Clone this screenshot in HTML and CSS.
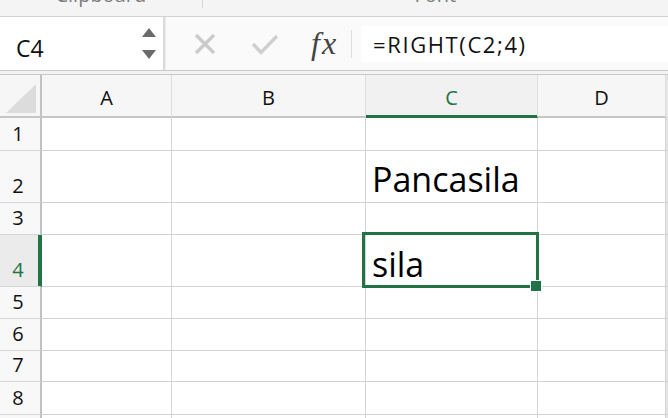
FILE: index.html
```html
<!DOCTYPE html>
<html>
<head>
<meta charset="utf-8">
<link rel="stylesheet" href="styles.css">
</head>
<body>
<div class="app">
  <div class="ribbon">
    <div class="rgroup clip"><span class="rlabel">Clipboard</span></div>
    <div class="rsep"></div>
    <div class="rgroup fontg"><span class="rlabel">Font</span></div>
  </div>
  <div class="fbar">
    <div class="namebox">
      <span class="ref">C4</span>
      <div class="spin">
        <svg width="14" height="9" viewBox="0 0 14 9"><polygon points="7,0 14,9 0,9" fill="#6b6b6b"/></svg>
        <svg width="14" height="9" viewBox="0 0 14 9"><polygon points="0,0 14,0 7,9" fill="#6b6b6b"/></svg>
      </div>
    </div>
    <div class="fcontrols">
      <svg class="ic-x" width="22" height="22" viewBox="0 0 22 22"><path d="M2 2 L20 20 M20 2 L2 20" stroke="#cbcbcb" stroke-width="3.4" fill="none"/></svg>
      <svg class="ic-check" width="28" height="21" viewBox="0 0 28 21"><polyline points="2,10 10,18.5 26,2" stroke="#cfcfcf" stroke-width="3.4" fill="none"/></svg>
      <span class="fx">fx</span>
      <span class="fsep"></span>
      <div class="finput">=RIGHT(C2;4)</div>
    </div>
  </div>
  <div class="strip"></div>
  <div class="sheet">
    <div class="corner"><svg width="30" height="29" viewBox="0 0 30 29"><polygon points="30,0 30,29 0,29" fill="#dcdcdc"/></svg></div>
    <div class="ch">A</div>
    <div class="ch">B</div>
    <div class="ch sel">C</div>
    <div class="ch">D</div>
    <div class="edge"></div>

    <div class="rh">1</div><div class="c"></div><div class="c"></div><div class="c"></div><div class="c"></div><div class="edge"></div>
    <div class="rh">2</div><div class="c"></div><div class="c"></div><div class="c"><span class="val">Pancasila</span></div><div class="c"></div><div class="edge"></div>
    <div class="rh">3</div><div class="c"></div><div class="c"></div><div class="c"></div><div class="c"></div><div class="edge"></div>
    <div class="rh sel">4</div><div class="c"></div><div class="c"></div><div class="c active"><span class="val">sila</span><span class="selbox"></span><span class="handle"></span></div><div class="c"></div><div class="edge"></div>
    <div class="rh">5</div><div class="c"></div><div class="c"></div><div class="c"></div><div class="c"></div><div class="edge"></div>
    <div class="rh">6</div><div class="c"></div><div class="c"></div><div class="c"></div><div class="c"></div><div class="edge"></div>
    <div class="rh">7</div><div class="c"></div><div class="c"></div><div class="c"></div><div class="c"></div><div class="edge"></div>
    <div class="rh">8</div><div class="c"></div><div class="c"></div><div class="c"></div><div class="c"></div><div class="edge"></div>
    <div class="rh"></div><div class="c"></div><div class="c"></div><div class="c"></div><div class="c"></div><div class="edge"></div>
  </div>
</div>
</body>
</html>
```
FILE: styles.css
```css
* { box-sizing: border-box; }
html, body { margin: 0; padding: 0; }
body {
  width: 668px;
  height: 418px;
  overflow: hidden;
  background: #ffffff;
  font-family: "Open Sans", "Liberation Sans", sans-serif;
  color: #111;
}
.app { width: 668px; height: 418px; overflow: hidden; }

/* ribbon */
.ribbon {
  height: 17px;
  display: flex;
  background: #f4f4f4;
  border-bottom: 1px solid #d2d2d2;
  overflow: hidden;
}
.rgroup { display: flex; justify-content: center; }
.clip { width: 208px; }
.fontg { width: 480px; }
.rsep { width: 1px; height: 8px; background: #d8d8d8; }
.rlabel {
  font-size: 20px;
  line-height: 20px;
  margin-top: -15px;
  color: #7c7c7c;
}

/* formula bar */
.fbar {
  height: 54px;
  display: flex;
  background: #ececec;
  border-bottom: 1px solid #c9c9c9;
}
.namebox {
  width: 165px;
  background: #ffffff;
  border-right: 2px solid #dadada;
  display: flex;
  align-items: center;
}
.ref {
  flex: 1;
  padding-left: 16px;
  padding-top: 9px;
  font-size: 23px;
  line-height: 30px;
  color: #111;
}
.spin {
  width: 14px;
  margin-right: 7px;
  display: flex;
  flex-direction: column;
  gap: 13px;
}
.spin svg { display: block; }
.fcontrols {
  flex: 1;
  display: flex;
  align-items: center;
  background: #fafafa;
  margin-left: 1px;
}
.ic-x { margin-left: 28px; margin-top: 1px; display: block; }
.ic-check { margin-left: 35px; margin-top: 1px; display: block; }
.fx {
  margin-left: 32px;
  font-family: "Liberation Serif", serif;
  font-style: italic;
  font-size: 32px;
  line-height: 30px;
  letter-spacing: 2px;
  color: #444;
  margin-top: -2px;
}
.fsep {
  margin-left: 13px;
  width: 1px;
  height: 28px;
  background: #dedede;
}
.finput {
  flex: 1;
  margin-left: 9px;
  height: 36px;
  background: #ffffff;
  padding-left: 12px;
  font-size: 22px;
  line-height: 36px;
  letter-spacing: 1.6px;
  color: #111;
}

.strip {
  height: 4px;
  background: #f3f3f3;
  border-bottom: 1px solid #c9c9c9;
}

/* sheet grid */
.sheet {
  display: grid;
  grid-template-columns: 42px 130px 194px 172px 128px 1fr;
  grid-template-rows: 43px 33px 52px 32px 52px 32px 32px 31px 33px 32px;
}
.corner {
  background: #f6f6f6;
  border-right: 2px solid #c2c2c2;
  border-bottom: 2px solid #c6c6c6;
  padding: 9px 0 0 6px;
}
.corner svg { display: block; }
.ch {
  background: #f6f6f6;
  border-right: 1px solid #dedede;
  border-bottom: 2px solid #c6c6c6;
  display: flex;
  align-items: center;
  justify-content: center;
  padding-top: 5px;
  font-size: 20px;
  line-height: 20px;
  color: #111;
}
.ch.sel {
  background: #f1f1f1;
  color: #217346;
  border-bottom-color: #217346;
  box-shadow: inset 0 -1px 0 #217346;
}
.rh {
  background: #f8f8f8;
  border-right: 2px solid #c2c2c2;
  border-bottom: 1px solid #d6d6d6;
  display: flex;
  justify-content: center;
  align-items: flex-end;
  padding-bottom: 6px;
  padding-right: 4px;
  font-size: 20px;
  line-height: 20px;
  color: #111;
}
.rh.sel {
  background: #ebebeb;
  color: #217346;
  border-right-color: #217346;
  box-shadow: inset -2px 0 0 #217346;
}
.c {
  border-right: 1px solid #d4d4d4;
  border-bottom: 1px solid #d4d4d4;
  display: flex;
  align-items: flex-end;
  padding: 0 0 6px 6px;
  background: #ffffff;
}
.val {
  font-size: 34px;
  line-height: 34px;
  color: #000;
  white-space: nowrap;
}
.active { position: relative; padding-bottom: 5px; }
.selbox {
  position: absolute;
  top: -3px;
  left: -4px;
  right: -2px;
  bottom: -2px;
  border: 3px solid #217346;
  z-index: 2;
}
.handle {
  position: absolute;
  right: -4px;
  bottom: -5px;
  width: 10px;
  height: 10px;
  background: #217346;
  box-shadow: 0 0 0 1px #ffffff;
  z-index: 3;
}
.edge {
  background: #e4e4e4;
  border-bottom: 1px solid #d4d4d4;
}
```
